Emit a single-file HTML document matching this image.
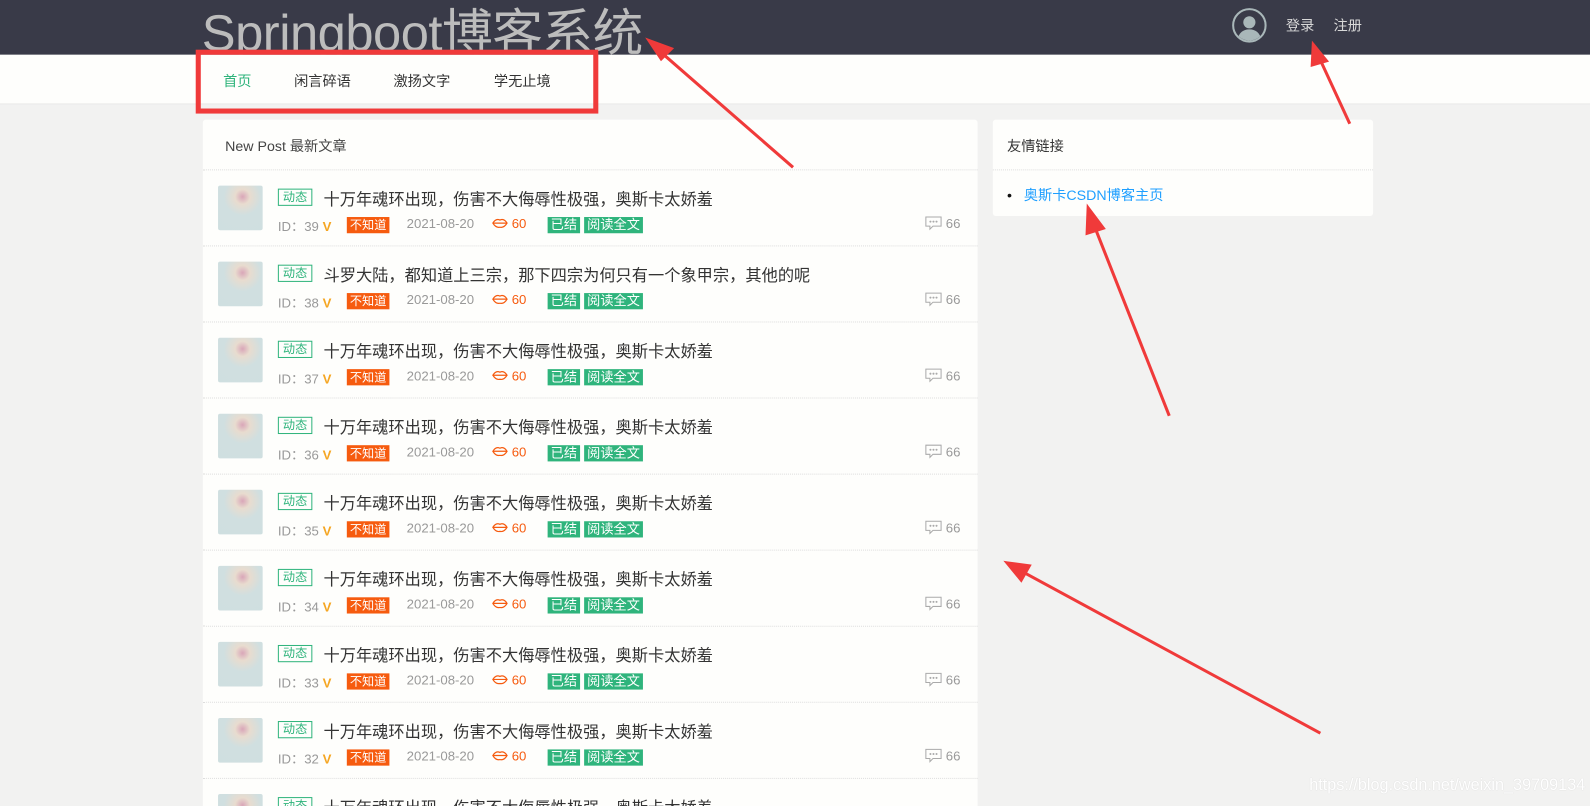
<!DOCTYPE html>
<html style="width:1590px;height:806px;overflow:hidden"><head><meta charset="utf-8"><style>
*{margin:0;padding:0;box-sizing:border-box}
body{width:1590px;height:806px;overflow:hidden;background:#f2f2f1;font-family:"Liberation Sans","Noto Sans CJK SC",sans-serif;position:relative}
#clip{position:absolute;left:0;top:0;width:1590px;height:806px;overflow:hidden}
#w{position:absolute;left:0;top:0;width:1568px;height:795px;transform:scale(1.0141);transform-origin:0 0;overflow:hidden}
.hd{position:absolute;left:0;top:0;width:1568px;height:54px;background:#393a48;overflow:hidden}
.title{position:absolute;left:199px;top:-7px;font-size:50px;color:#bcbcbc;white-space:nowrap;letter-spacing:-0.5px}
.av{position:absolute;left:1215px;top:8px;width:34px;height:34px;border-radius:50%;border:2px solid #a9b7b9;overflow:hidden}
.hd .lk{position:absolute;top:15px;font-size:14px;color:#d8d8d8}
.nav{position:absolute;left:0;top:54px;width:1568px;height:49px;background:#fefefc;border-bottom:1px solid #e8e8e8}
.nav span{position:absolute;top:16px;font-size:14px;color:#333}
.card{position:absolute;left:200px;top:118px;width:764px;height:700px;background:#fefefc;border-radius:3px}
.ch{height:50px;border-bottom:1px dotted #ddd;padding:16px 0 0 22px;font-size:14px;color:#444}
.it{position:relative;height:75px;border-bottom:1px dotted #ddd}
.img{position:absolute;left:15px;top:15px;width:44px;height:44px;border-radius:2px;background:radial-gradient(circle at 55% 25%,#d9a6b8 0,#e8dccf 18%,#d0dfe0 45%,#cfdfe0 100%)}
.tag{position:absolute;left:74px;top:18px;height:17px;border:1px solid #2fb47c;color:#2fb47c;font-size:12px;line-height:15px;padding:0 4px}
.t{position:absolute;left:119px;top:15px;font-size:16px;color:#333}
.m{position:absolute;top:45px;font-size:13px;color:#999}
.red{background:#f65b0f;color:#fff;padding:0 3px;height:16px;line-height:16px;font-size:12px}
.g{background:#2fb47c;color:#fff;padding:0 3px;height:16px;line-height:16px}
.side{position:absolute;left:979px;top:118px;width:375px;height:95px;background:#fefefc;border-radius:3px}
.side .h{height:50px;border-bottom:1px dotted #ddd;padding:16px 0 0 14px;font-size:14px;color:#333}
.wm{position:absolute;left:1291px;top:766px;font-size:16px;color:#fff;text-shadow:0 0 1px #ccc}
</style></head><body><div id="clip"><div id="w">
<div class="hd"><div class="title">Springboot博客系统</div>
<div class="av"><svg width="30" height="30" viewBox="0 0 30 30"><circle cx="15" cy="12" r="6" fill="#a9b7b9"/><path d="M3 30 Q5 19 15 19 Q25 19 27 30Z" fill="#a9b7b9"/></svg></div>
<span class="lk" style="left:1268px">登录</span><span class="lk" style="left:1315px">注册</span></div>
<div class="nav"><span style="left:220px;color:#2fb47c">首页</span><span style="left:290px">闲言碎语</span><span style="left:388px">激扬文字</span><span style="left:487px">学无止境</span></div>
<div class="card"><div class="ch">New Post 最新文章</div>
<script>
var s='';for(var i=0;i<9;i++){var t=i==1?'斗罗大陆，都知道上三宗，那下四宗为何只有一个象甲宗，其他的呢':'十万年魂环出现，伤害不大侮辱性极强，奥斯卡太娇羞';
s+='<div class="it"><div class="img"></div><div class="tag">动态</div><div class="t">'+t+'</div>'+
'<span class="m" style="left:74px">ID：'+(39-i)+' <b style="color:#f5a623">V</b></span>'+
'<span class="m red" style="left:142px;top:46px">不知道</span>'+
'<span class="m" style="left:201px">2021-08-20</span>'+
'<span class="m" style="left:285px;color:#f65b0f"><svg width="16" height="10" viewBox="0 0 16 10" style="vertical-align:0"><path d="M1 5Q4 0 8 2Q12 0 15 5Q12 10 8 9Q4 10 1 5Z M1 5H15" fill="none" stroke="#f65b0f" stroke-width="1.2"/></svg> 60</span>'+
'<span class="m g" style="left:340px;top:46px">已结</span><span class="m g" style="left:376px;top:46px">阅读全文</span>'+
'<span class="m" style="left:712px"><svg width="17" height="15" viewBox="0 0 17 15" style="vertical-align:-3px"><path d="M1 1H16V10H8L5 13V10H1Z" fill="none" stroke="#aaa"/><circle cx="5.5" cy="5.5" r="1" fill="#aaa"/><circle cx="8.5" cy="5.5" r="1" fill="#aaa"/><circle cx="11.5" cy="5.5" r="1" fill="#aaa"/></svg> 66</span></div>';}
document.write(s);
</script></div>
<div class="side"><div class="h">友情链接</div><div style="padding:14px 0 0 14px;font-size:14px;color:#1e9fff"><span style="color:#111">•</span> &nbsp;&nbsp;<span>奥斯卡CSDN博客主页</span></div></div>
<div class="wm">https://blog.csdn.net/weixin_39709134</div>
<svg style="position:absolute;left:0;top:0" width="1568" height="795">
<rect x="195.5" y="51.5" width="392" height="58" fill="none" stroke="#f03a3a" stroke-width="5"/>
<g stroke="#f03a3a" stroke-width="3" fill="#f03a3a">
<line x1="782" y1="165" x2="650" y2="50"/><polygon points="640,40 662,48 652,58"/>
<line x1="1331" y1="122" x2="1300" y2="55"/><polygon points="1295,44 1308,60 1294,64"/>
<line x1="1153" y1="410" x2="1078" y2="220"/><polygon points="1073,205 1088,225 1072,230"/>
<line x1="1302" y1="723" x2="1005" y2="562"/><polygon points="993,555 1015,558 1007,572"/>
</g></svg>
</div></div></body></html>
